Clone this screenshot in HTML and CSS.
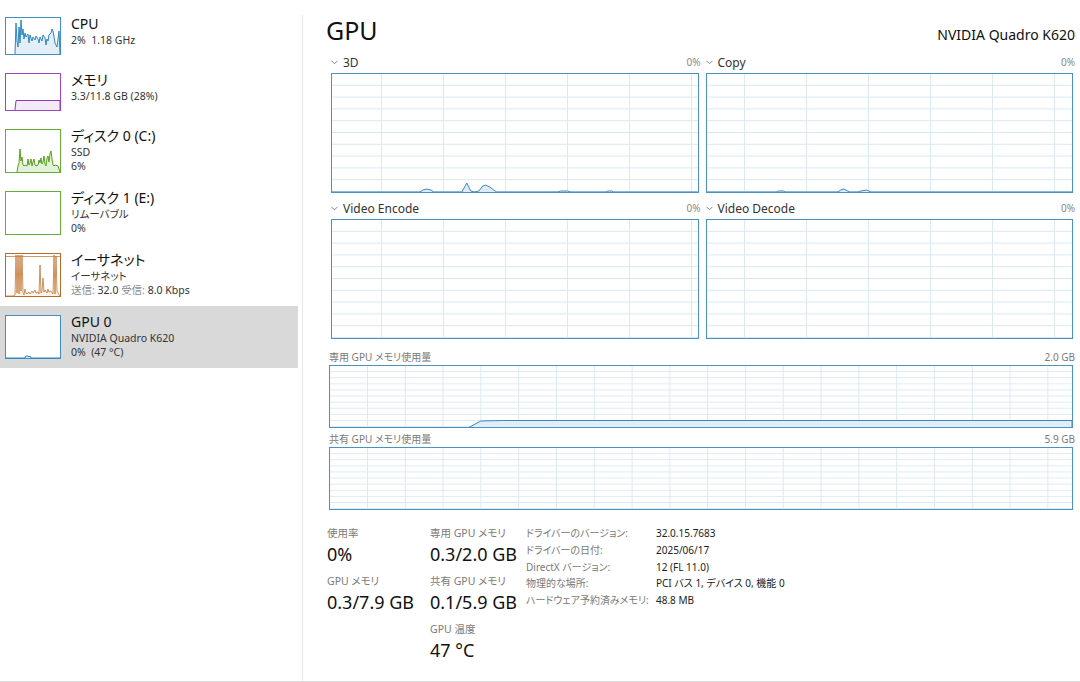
FILE: index.html
```html
<!DOCTYPE html>
<html lang="ja">
<head>
<meta charset="utf-8">
<title>GPU</title>
<link rel="stylesheet" href="styles.css">
</head>
<body>
<div class="app">
  <aside class="sidebar">
    <div class="item">
      <svg class="thumb" width="56" height="38" viewBox="0 0 56 38">
        <rect x="0.5" y="0.5" width="55" height="37" fill="#fff" stroke="#3f8fc3"/>
        <polyline points="10,37 11,6 12,24 13,30 14,10 15,26 16,3 17,18 18,12 19,22 20,16 21,20 23,17 24,26 25,18 27,24 28,20 30,23 31,19 33,22 34,26 35,20 37,24 38,18 40,21 41,28 42,22 43,24 44,18 46,16 47,12 48,14 49,20 50,26 52,30 53,22 54,14 55,37" fill="#e3eff8" stroke="#2f86c0" stroke-width="1"/>
      </svg>
      <div class="info">
        <div class="title">CPU</div>
        <div class="sub">2%&nbsp;&nbsp;1.18 GHz</div>
      </div>
    </div>
    <div class="item">
      <svg class="thumb" width="56" height="38" viewBox="0 0 56 38">
        <rect x="0.5" y="0.5" width="55" height="37" fill="#fff" stroke="#a046bd"/>
        <polyline points="10,37 11,27.5 55,27.5 55,37" fill="#f3eaf7" stroke="#9a35b8" stroke-width="1"/>
      </svg>
      <div class="info">
        <div class="title">メモリ</div>
        <div class="sub">3.3/11.8 GB (28%)</div>
      </div>
    </div>
    <div class="item tall">
      <svg class="thumb" width="56" height="44" viewBox="0 0 56 44">
        <rect x="0.5" y="0.5" width="55" height="43" fill="#fff" stroke="#68ad33"/>
        <polyline points="12,43 13,37 14,34 15,20 16,32 17,28 18,36 19,37 20,36 22,37 23,30 24,36 25,34 26,30 27,37 28,33 29,30 30,36 31,37 33,36 34,31 35,34 36,29 37,35 38,33 39,27 40,35 41,37 42,29 43,27 44,33 45,25 46,22 47,30 48,36 49,37 50,36 53,37 55,43" fill="#e4f1d9" stroke="#58a022" stroke-width="1"/>
      </svg>
      <div class="info">
        <div class="title">ディスク 0 (C:)</div>
        <div class="sub">SSD</div>
        <div class="sub">6%</div>
      </div>
    </div>
    <div class="item tall">
      <svg class="thumb" width="56" height="44" viewBox="0 0 56 44">
        <rect x="0.5" y="0.5" width="55" height="43" fill="#fff" stroke="#68ad33"/>
      </svg>
      <div class="info">
        <div class="title">ディスク 1 (E:)</div>
        <div class="sub">リムーバブル</div>
        <div class="sub">0%</div>
      </div>
    </div>
    <div class="item tall">
      <svg class="thumb" width="56" height="44" viewBox="0 0 56 44">
        <rect x="0.5" y="0.5" width="55" height="43" fill="#fff" stroke="#b96b26"/>
        <line x1="1" y1="3.5" x2="55" y2="3.5" stroke="#d19a6a" stroke-width="1"/>
        <polyline points="1,43 8,43 10,42 11,2 12,40 13,2 14,41 15,2 16,38 17,2 18,40 19,42 20,36 21,40 22,41 24,39 25,41 27,38 28,40 30,37 31,40 33,39 34,41 35,12 36,40 37,38 38,25 39,39 40,37 42,40 43,36 44,39 46,38 47,40 48,41 49,2 50,41 51,3 52,38 53,40 55,43" fill="#fcf3eb" stroke="#c27636" stroke-width="0.8"/>
      </svg>
      <div class="info">
        <div class="title">イーサネット</div>
        <div class="sub">イーサネット</div>
        <div class="sub"><span class="muted">送信:</span> 32.0 <span class="muted">受信:</span> 8.0 Kbps</div>
      </div>
    </div>
    <div class="item tall active">
      <svg class="thumb" width="56" height="44" viewBox="0 0 56 44">
        <rect x="0.5" y="0.5" width="55" height="43" fill="#fff" stroke="#3f8fc3"/>
        <polyline points="1,43 20,43 21,41 23,41 24,42 25,41 26,43 55,43" fill="#e3eff8" stroke="#2f86c0" stroke-width="1"/>
      </svg>
      <div class="info">
        <div class="title">GPU 0</div>
        <div class="sub">NVIDIA Quadro K620</div>
        <div class="sub">0%&nbsp;&nbsp;(47 °C)</div>
      </div>
    </div>
  </aside>

  <div class="divider"></div>

  <main class="main">
    <header class="head">
      <h1 class="heading">GPU</h1>
      <div class="model">NVIDIA Quadro K620</div>
    </header>

    <section class="engines">
      <div class="engine">
        <div class="elabel">
          <span class="ename"><svg class="chev" width="7" height="5" viewBox="0 0 7 5"><polyline points="0.5,0.8 3.5,3.8 6.5,0.8" fill="none" stroke="#8a8a8a" stroke-width="1"/></svg>3D</span>
          <span class="epct">0%</span>
        </div>
        <div class="graph grid-a">
          <svg class="plot" viewBox="0 0 366 118" preserveAspectRatio="none">
            <polyline points="0,118 88,118 91,116 95,115 99,116 102,118 130,118 135,109 139,117 143,118 147,117 151,112 154,111 158,113 162,116 165,118 226,118 229,117 236,117 239,118 274,118 276,117 280,117 282,118 366,118" fill="#dcebf6" stroke="#3a88bd" stroke-width="1"/>
          </svg>
        </div>
      </div>
      <div class="engine">
        <div class="elabel">
          <span class="ename"><svg class="chev" width="7" height="5" viewBox="0 0 7 5"><polyline points="0.5,0.8 3.5,3.8 6.5,0.8" fill="none" stroke="#8a8a8a" stroke-width="1"/></svg>Copy</span>
          <span class="epct">0%</span>
        </div>
        <div class="graph grid-b">
          <svg class="plot" viewBox="0 0 366 118" preserveAspectRatio="none">
            <polyline points="0,118 70,118 71,117 77,117 78,118 131,118 134,116 137,115 141,117 143,118 151,118 154,117 160,116 164,118 366,118" fill="#dcebf6" stroke="#3a88bd" stroke-width="1"/>
          </svg>
        </div>
      </div>
      <div class="engine">
        <div class="elabel">
          <span class="ename"><svg class="chev" width="7" height="5" viewBox="0 0 7 5"><polyline points="0.5,0.8 3.5,3.8 6.5,0.8" fill="none" stroke="#8a8a8a" stroke-width="1"/></svg>Video Encode</span>
          <span class="epct">0%</span>
        </div>
        <div class="graph grid-c"></div>
      </div>
      <div class="engine">
        <div class="elabel">
          <span class="ename"><svg class="chev" width="7" height="5" viewBox="0 0 7 5"><polyline points="0.5,0.8 3.5,3.8 6.5,0.8" fill="none" stroke="#8a8a8a" stroke-width="1"/></svg>Video Decode</span>
          <span class="epct">0%</span>
        </div>
        <div class="graph grid-d"></div>
      </div>
    </section>

    <section class="memory">
      <div class="mlabel"><span>専用 GPU メモリ使用量</span><span>2.0 GB</span></div>
      <div class="mgraph">
        <svg class="plot" viewBox="0 0 743 61" preserveAspectRatio="none">
          <polyline points="139,61.5 151,55 173,54.5 743,54.5 743,61.5" fill="#e1eef7" stroke="#3a88bd" stroke-width="1"/>
        </svg>
      </div>
      <div class="mlabel second"><span>共有 GPU メモリ使用量</span><span>5.9 GB</span></div>
      <div class="mgraph"></div>
    </section>

    <section class="stats">
      <div class="scol c1">
        <div class="stat"><div class="slabel">使用率</div><div class="sval">0%</div></div>
        <div class="stat"><div class="slabel">GPU メモリ</div><div class="sval">0.3/7.9 GB</div></div>
      </div>
      <div class="scol c2">
        <div class="stat"><div class="slabel">専用 GPU メモリ</div><div class="sval">0.3/2.0 GB</div></div>
        <div class="stat"><div class="slabel">共有 GPU メモリ</div><div class="sval">0.1/5.9 GB</div></div>
        <div class="stat"><div class="slabel">GPU 温度</div><div class="sval">47 °C</div></div>
      </div>
      <dl class="details">
        <dt>ドライバーのバージョン:</dt><dd>32.0.15.7683</dd>
        <dt>ドライバーの日付:</dt><dd>2025/06/17</dd>
        <dt>DirectX バージョン:</dt><dd>12 (FL 11.0)</dd>
        <dt>物理的な場所:</dt><dd>PCI バス 1, デバイス 0, 機能 0</dd>
        <dt>ハードウェア予約済みメモリ:</dt><dd>48.8 MB</dd>
      </dl>
    </section>
  </main>
</div>
</body>
</html>
```

FILE: styles.css
```css
* {
  box-sizing: border-box;
}

html,
body {
  margin: 0;
  padding: 0;
  background: #ffffff;
}

body {
  font-family: "Noto Sans", "Noto Sans CJK JP", sans-serif;
  font-feature-settings: "palt";
  color: #1a1a1a;
}

.app {
  display: flex;
  height: 682px;
  border-bottom: 1px solid #dadada;
  overflow: hidden;
}

/* ---------- sidebar ---------- */
.sidebar {
  width: 298px;
  flex: none;
  padding-top: 8px;
  margin-right: 4px;
}

.item {
  display: flex;
  align-items: flex-start;
  gap: 10px;
  height: 56px;
  padding: 6px 0 0 5px;
}

.item.tall {
  height: 62px;
}

.item.active {
  background: #d9d9d9;
}

.thumb {
  display: block;
  flex: none;
  margin-top: 3px;
}

.title {
  font-size: 14px;
  line-height: 19px;
  color: #111;
}

.sub {
  font-size: 10.5px;
  line-height: 14px;
  color: #333;
}

.muted {
  color: #8a8a8a;
}

/* ---------- divider ---------- */
.divider {
  width: 1px;
  flex: none;
  margin-top: 15px;
  background: #e6e6e6;
}

/* ---------- main ---------- */
.main {
  flex: 1;
  padding: 15px 7px 0 26px;
}

.head {
  display: flex;
  justify-content: space-between;
  align-items: baseline;
  height: 32px;
}

.heading {
  margin: 0 0 0 -3px;
  font-size: 25px;
  line-height: 30px;
  font-weight: 400;
  color: #111;
}

.model {
  font-size: 14px;
  line-height: 20px;
  margin-right: -2px;
  color: #111;
}

/* ---------- engine graphs ---------- */
.engines {
  display: grid;
  grid-template-columns: 1fr 1fr;
  column-gap: 7px;
  margin-left: 2px;
}

.elabel {
  display: flex;
  justify-content: space-between;
  align-items: center;
  height: 22px;
  margin-top: 4px;
  margin-right: -2px;
}

.ename {
  display: flex;
  align-items: center;
  gap: 5px;
  font-size: 12px;
  color: #333;
}

.chev {
  display: block;
  margin-top: 1px;
}

.epct {
  font-size: 10px;
  color: #8a8a8a;
}

.graph {
  height: 120px;
  border: 1px solid #4a92c2;
  background-color: #fff;
  background-image:
    linear-gradient(to bottom, transparent calc(100% - 1px), #d8e8f3 calc(100% - 1px)),
    linear-gradient(to right, #dbe9f3 1px, transparent 1px);
  background-size: 100% 10%, 62px 100%;
}

.grid-a { background-position: 0 0, 49px 0; }
.grid-b { background-position: 0 0, 37px 0; }
.grid-c { background-position: 0 0, 49px 0; }
.grid-d { background-position: 0 0, 37px 0; }

.plot {
  display: block;
  width: 100%;
  height: 100%;
}

/* ---------- memory graphs ---------- */
.memory {
  margin-top: 9px;
}

.mlabel {
  display: flex;
  justify-content: space-between;
  align-items: center;
  height: 17px;
  margin-right: -2px;
  font-size: 10px;
  color: #7a7a7a;
}

.mlabel.second {
  margin-top: 2px;
}

.mgraph {
  height: 63px;
  border: 1px solid #4a92c2;
  background-color: #fff;
  background-image:
    linear-gradient(to bottom, transparent calc(100% - 1px), #dae9f3 calc(100% - 1px)),
    linear-gradient(to right, #dbe9f3 1px, transparent 1px);
  background-size: 100% 10%, 37.8px 100%;
  background-position: 0 0, 37px 0;
}

/* ---------- stats ---------- */
.stats {
  display: flex;
  align-items: flex-start;
  margin: 15px 0 0 -2px;
}

.scol.c1 {
  width: 103px;
}

.scol.c2 {
  width: 96px;
}

.stat {
  margin-bottom: 6px;
}

.slabel {
  font-size: 10.5px;
  line-height: 16px;
  color: #7a7a7a;
}

.sval {
  font-size: 18px;
  line-height: 26px;
  color: #111;
}

.details {
  display: grid;
  grid-template-columns: 130px auto;
  align-content: start;
  margin: 0;
  font-size: 10px;
  line-height: 16.8px;
}

.details dt {
  color: #7a7a7a;
  white-space: nowrap;
}

.details dd {
  margin: 0;
  color: #222;
  white-space: nowrap;
}
```
